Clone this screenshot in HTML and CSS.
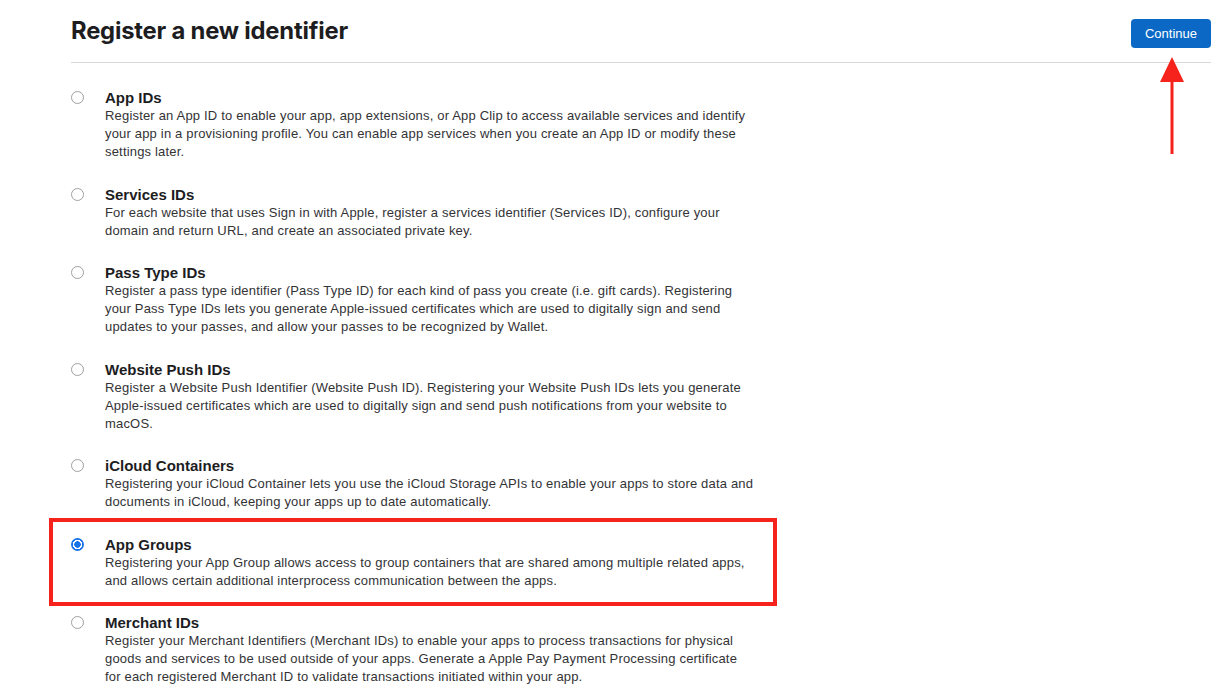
FILE: index.html
```html
<!DOCTYPE html>
<html lang="en">
<head>
<meta charset="utf-8">
<title>Register a new identifier</title>
<link rel="stylesheet" href="styles.css">
</head>
<body>
<div class="page">
  <header class="header">
    <h1 class="title">Register a new identifier</h1>
    <button class="btn-continue" type="button">Continue</button>
  </header>
  <ul class="options">
    <li class="option">
      <span class="radio"></span>
      <div class="option-body">
        <div class="option-title">App IDs</div>
        <p class="option-desc">Register an App ID to enable your app, app extensions, or App Clip to access available services and identify your app in a provisioning profile. You can enable app services when you create an App ID or modify these settings later.</p>
      </div>
    </li>
    <li class="option">
      <span class="radio"></span>
      <div class="option-body">
        <div class="option-title">Services IDs</div>
        <p class="option-desc">For each website that uses Sign in with Apple, register a services identifier (Services ID), configure your domain and return URL, and create an associated private key.</p>
      </div>
    </li>
    <li class="option">
      <span class="radio"></span>
      <div class="option-body">
        <div class="option-title">Pass Type IDs</div>
        <p class="option-desc">Register a pass type identifier (Pass Type ID) for each kind of pass you create (i.e. gift cards). Registering your Pass Type IDs lets you generate Apple-issued certificates which are used to digitally sign and send updates to your passes, and allow your passes to be recognized by Wallet.</p>
      </div>
    </li>
    <li class="option">
      <span class="radio"></span>
      <div class="option-body">
        <div class="option-title">Website Push IDs</div>
        <p class="option-desc">Register a Website Push Identifier (Website Push ID). Registering your Website Push IDs lets you generate Apple-issued certificates which are used to digitally sign and send push notifications from your website to macOS.</p>
      </div>
    </li>
    <li class="option">
      <span class="radio"></span>
      <div class="option-body">
        <div class="option-title">iCloud Containers</div>
        <p class="option-desc">Registering your iCloud Container lets you use the iCloud Storage APIs to enable your apps to store data and documents in iCloud, keeping your apps up to date automatically.</p>
      </div>
    </li>
    <li class="option option-highlight">
      <span class="radio radio-checked"></span>
      <div class="option-body">
        <div class="option-title">App Groups</div>
        <p class="option-desc">Registering your App Group allows access to group containers that are shared among multiple related apps, and allows certain additional interprocess communication between the apps.</p>
      </div>
      <span class="annot-box"></span>
    </li>
    <li class="option">
      <span class="radio"></span>
      <div class="option-body">
        <div class="option-title">Merchant IDs</div>
        <p class="option-desc">Register your Merchant Identifiers (Merchant IDs) to enable your apps to process transactions for physical goods and services to be used outside of your apps. Generate a Apple Pay Payment Processing certificate for each registered Merchant ID to validate transactions initiated within your app.</p>
      </div>
    </li>
  </ul>
</div>
<svg class="annot-arrow" width="30" height="100" viewBox="0 0 30 100" aria-hidden="true">
  <polygon points="15,0 27,25 3,25" fill="#f5231b"/>
  <rect x="13.5" y="22" width="3" height="75" fill="#f5231b"/>
</svg>
</body>
</html>
```
FILE: styles.css
```css
* { box-sizing: border-box; }
html, body { margin: 0; padding: 0; background: #fff; }
body {
  font-family: "Liberation Sans", Arial, sans-serif;
  color: #1d1d1f;
  position: relative;
  height: 698px;
  overflow: hidden;
}
.page {
  margin-left: 71px;
  width: 1140px;
}
.header {
  display: flex;
  justify-content: space-between;
  align-items: flex-start;
  height: 63px;
  padding-top: 17px;
  border-bottom: 1px solid #d8d8dc;
}
.title {
  margin: 0;
  font-family: Inter, "Liberation Sans", sans-serif;
  font-size: 23.8px;
  line-height: 28px;
  font-weight: 700;
  letter-spacing: -0.2px;
  color: #1d1d1f;
}
.btn-continue {
  margin-top: 2px;
  width: 80px;
  height: 29px;
  border: none;
  border-radius: 4px;
  background: #0b68c4;
  color: #fff;
  font-family: "Liberation Sans", Arial, sans-serif;
  font-size: 13px;
  cursor: pointer;
}
.options {
  list-style: none;
  margin: 0;
  padding: 25px 0 0 0;
}
.option {
  position: relative;
  display: flex;
  margin-bottom: 23.5px;
}
.radio {
  flex: none;
  width: 13px;
  height: 13px;
  margin-top: 3px;
  margin-right: 21px;
  border: 1px solid #a0a0a0;
  border-radius: 50%;
  background: #fff;
}
.radio-checked {
  border: none;
  background: radial-gradient(circle, #1a73e8 0 3px, #fff 3.5px 4.5px, #1a73e8 5px);
}
.option-body {
  width: 650px;
}
.option-title {
  font-size: 15px;
  line-height: 19px;
  font-weight: 700;
  color: #1d1d1f;
}
.option-desc {
  margin: 0;
  font-size: 13px;
  line-height: 18px;
  letter-spacing: 0.18px;
  color: #333336;
}
.annot-box {
  position: absolute;
  left: -22px;
  top: -17px;
  width: 728px;
  height: 88px;
  border: 4px solid #f5231b;
}
.annot-arrow {
  position: absolute;
  left: 1157px;
  top: 57px;
}
```
